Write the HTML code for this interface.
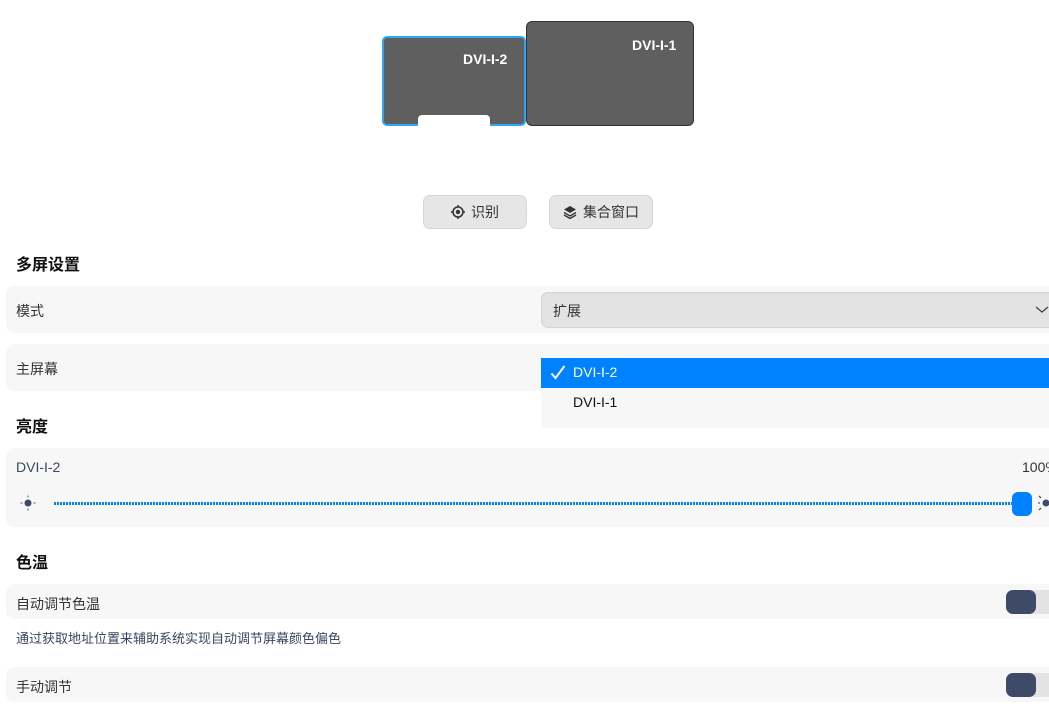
<html><head><style>
body{margin:0;width:1049px;height:722px;background:#fff;font-family:"Liberation Sans","Noto Sans CJK SC",sans-serif;position:relative;overflow:hidden;color:#1f2a40}
div{position:absolute;box-sizing:border-box}
.h{font-weight:bold;font-size:16px;color:#111;left:16px}
.row{left:6px;width:1060px;background:#f7f7f7;border-radius:8px}
.lbl{font-size:14px;color:#333;left:16px}
.btn{background:#e6e6e6;border:1px solid #d6d6d6;border-radius:7px;font-size:14px;color:#333;display:flex;align-items:center;justify-content:center;gap:6px}
.tg{width:60px;height:24px;background:#e3e3e3;border-radius:7px}
.tg i{position:absolute;left:0;top:0;width:30px;height:24px;background:#3f4a68;border-radius:7px}
</style></head><body>
<div style="left:382px;top:36px;width:144px;height:90px;background:#5f5f5f;border:2px solid #2ca7f8;border-radius:5px"></div>
<div style="left:418px;top:115px;width:72px;height:11px;background:#fff;border-radius:4px 4px 0 0"></div>
<div style="left:463px;top:51px;color:#fff;font-size:14px;font-weight:bold">DVI-I-2</div>
<div style="left:526px;top:21px;width:168px;height:105px;background:#5f5f5f;border:1px solid #333;border-radius:6px"></div>
<div style="left:632px;top:37px;color:#fff;font-size:14px;font-weight:bold">DVI-I-1</div>
<div class="btn" style="left:423px;top:195px;width:104px;height:34px"><svg width="14" height="14" viewBox="0 0 14 14"><circle cx="7" cy="7" r="5" fill="none" stroke="#333" stroke-width="1.6"/><circle cx="7" cy="7" r="2.2" fill="#333"/><path d="M7 0v2M7 12v2M0 7h2M12 7h2" stroke="#333" stroke-width="1.4"/></svg>识别</div>
<div class="btn" style="left:549px;top:195px;width:104px;height:34px"><svg width="14" height="14" viewBox="0 0 14 14"><path d="M7 1L13 4.5 7 8 1 4.5Z" fill="#333"/><path d="M1 7.5L7 11 13 7.5M1 10L7 13.5 13 10" fill="none" stroke="#333" stroke-width="1.4"/></svg>集合窗口</div>
<div class="h" style="top:251px">多屏设置</div>
<div class="row" style="top:286px;height:47px"></div>
<div class="lbl" style="top:301px">模式</div>
<div style="left:541px;top:292px;width:520px;height:36px;background:#e3e3e3;border:1px solid #d4d4d4;border-radius:7px"></div>
<div style="left:553px;top:301px;font-size:14px;color:#333">扩展</div>
<svg style="position:absolute;left:1035px;top:305px" width="14" height="10"><path d="M1 2l6 5 6-5" fill="none" stroke="#444" stroke-width="1.3"/></svg>
<div class="row" style="top:344px;height:47px"></div>
<div class="lbl" style="top:359px">主屏幕</div>
<div style="left:541px;top:358px;width:508px;height:70px;background:#f7f7f7"></div>
<div style="left:541px;top:358px;width:508px;height:30px;background:#0081ff"></div>
<svg style="position:absolute;left:550px;top:365px" width="16" height="16"><path d="M1.5 8.5l4 4.5 9-12" fill="none" stroke="#fff" stroke-width="2"/></svg>
<div style="left:573px;top:364px;font-size:14px;color:#fff">DVI-I-2</div>
<div style="left:573px;top:394px;font-size:14px;color:#111">DVI-I-1</div>
<div class="h" style="top:413px">亮度</div>
<div class="row" style="top:448px;height:79px"></div>
<div class="lbl" style="top:459px;color:#3a4560">DVI-I-2</div>
<div style="left:1022px;top:459px;font-size:14px;color:#333">100%</div>
<svg style="position:absolute;left:20px;top:495px" width="16" height="16"><circle cx="8" cy="8" r="3.5" fill="#3f4a68"/><g fill="#888"><rect x="7.3" y="0.5" width="1.4" height="2"/><rect x="7.3" y="13.5" width="1.4" height="2"/><rect x="0.5" y="7.3" width="2" height="1.4"/><rect x="13.5" y="7.3" width="2" height="1.4"/></g></svg>
<div style="left:54px;top:502px;width:960px;height:3px;background:repeating-linear-gradient(90deg,#0081ff 0 2px,transparent 2px 3px)"></div>
<div style="left:1012px;top:492px;width:20px;height:24px;background:#0081ff;border-radius:6px"></div>
<svg style="position:absolute;left:1038px;top:495px" width="16" height="16"><circle cx="8" cy="8" r="3.5" fill="#3f4a68"/><path d="M1 1l2 2M1 15l2-2M0 8h2" stroke="#555" stroke-width="1.3"/></svg>
<div class="h" style="top:549px">色温</div>
<div class="row" style="top:584px;height:35px"></div>
<div class="lbl" style="top:594px">自动调节色温</div>
<div class="tg" style="left:1006px;top:590px"><i></i></div>
<div style="left:16px;top:628px;font-size:13px;color:#3a4560">通过获取地址位置来辅助系统实现自动调节屏幕颜色偏色</div>
<div class="row" style="top:667px;height:35px"></div>
<div class="lbl" style="top:677px">手动调节</div>
<div class="tg" style="left:1006px;top:673px"><i></i></div>
</body></html>
